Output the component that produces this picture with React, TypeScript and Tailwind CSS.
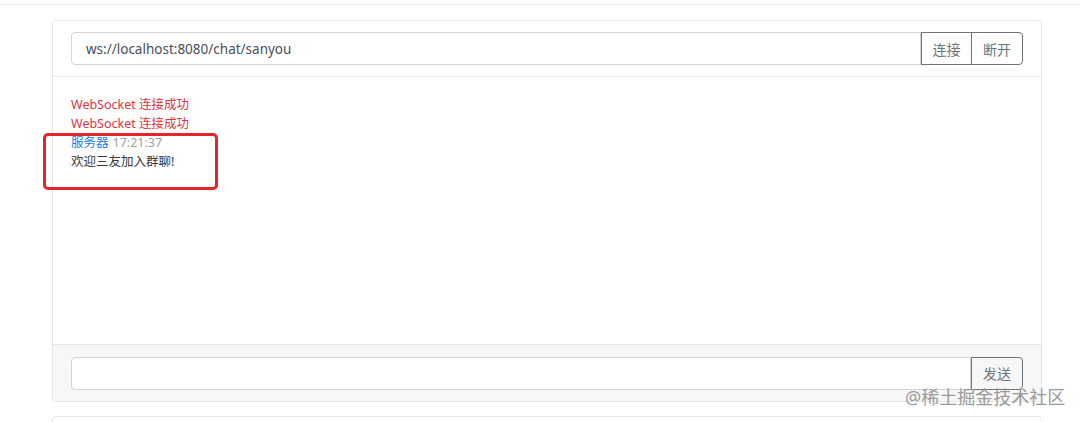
export default function App() {
  const font = "font-['Noto_Sans','Noto_Sans_CJK_SC',sans-serif]";
  return (
    <div className={`relative h-[422px] w-[1080px] overflow-hidden bg-white ${font}`}>
      {/* top rule */}
      <div className="h-[5px] border-b border-[#ebebeb]"></div>

      <div className="ml-[52px] mt-[15px] w-[990px]">
        {/* chat card */}
        <div className="overflow-hidden rounded-[4px] border border-[#e6e6e6]">
          {/* header */}
          <div className="flex h-[56px] items-center border-b border-[#e6e6e6] bg-white pl-[18px] pr-[18px]">
            <div className="flex h-[33px] flex-1 items-center rounded-l-[4px] border border-[#d4d4d4] pl-[14px] pt-[2px] text-[13.5px] text-[#495057]">
              ws://localhost:8080/chat/sanyou
            </div>
            <button className="h-[33px] w-[51px] border border-[#6c757d] pt-[1px] text-[14px] text-[#6c757d]">连接</button>
            <button className="-ml-px h-[33px] w-[52px] rounded-r-[4px] border border-[#6c757d] pt-[1px] text-[14px] text-[#6c757d]">断开</button>
          </div>

          {/* body */}
          <div className="h-[267px] bg-white pl-[18px] pt-[18px] text-[12.5px] leading-[19px]">
            <div className="text-[#dc3545]">WebSocket 连接成功</div>
            <div className="text-[#dc3545]">WebSocket 连接成功</div>
            <div>
              <span className="text-[#1a7cf5]">服务器</span>
              <span className="ml-[4px] text-[#a0a0a0]">17:21:37</span>
            </div>
            <div className="text-[#3a3a3a]">欢迎三友加入群聊!</div>
          </div>

          {/* footer */}
          <div className="flex h-[57px] items-center border-t border-[#e6e6e6] bg-[#f7f7f7] pl-[18px] pr-[18px]">
            <div className="h-[33px] flex-1 rounded-l-[4px] border border-[#d4d4d4] bg-white"></div>
            <button className="h-[33px] w-[52px] rounded-r-[4px] border border-[#6c757d] pt-[1px] text-[14px] text-[#6c757d]">发送</button>
          </div>
        </div>

        {/* next card edge */}
        <div className="mt-[14px] h-[20px] rounded-t-[4px] border border-[#e6e6e6]"></div>
      </div>

      {/* highlight box */}
      <div className="absolute left-[43px] top-[133px] h-[57px] w-[175px] rounded-[5px] border-[3px] border-[#e8232a]"></div>

      {/* watermark */}
      <div className="absolute left-[905px] top-[385px] text-[18px] leading-[25px] text-[#9a9a9a]">@稀土掘金技术社区</div>
    </div>
  );
}
